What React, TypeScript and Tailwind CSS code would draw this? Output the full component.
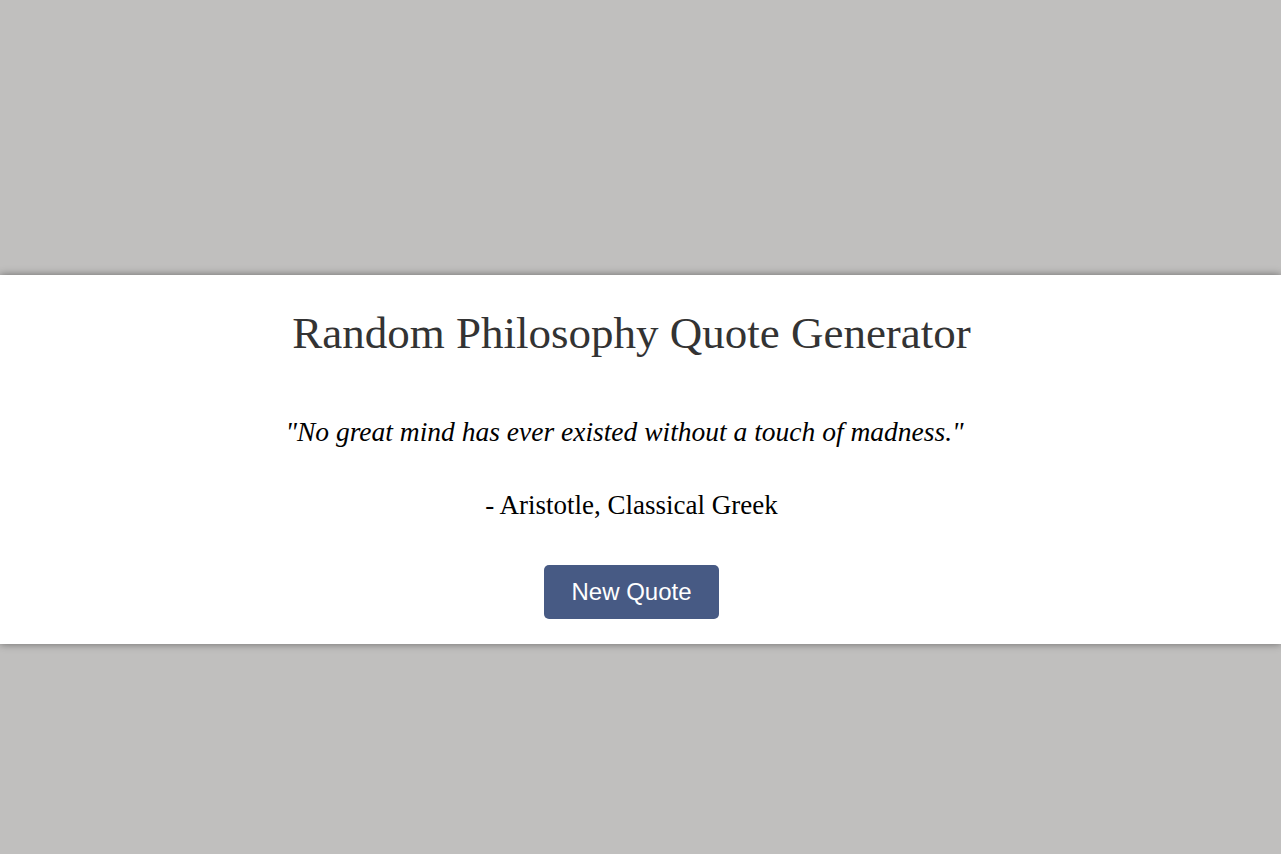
export default function App() {
  return (
    <div className="min-h-screen bg-[#c0bfbe] pt-[275px]">
      <main className="bg-white shadow-[0_0_8px_rgba(0,0,0,0.45)] flex flex-col items-center pt-[28px] pb-[25px] pr-[18px]">
        <h1 className="text-[45px] leading-[60px] text-[#333333] [font-family:'Liberation_Serif',serif]">
          Random Philosophy Quote Generator
        </h1>
        <p className="mt-[49px] mr-[14px] text-[27.5px] leading-[40px] italic text-black [font-family:'Liberation_Serif',serif]">
          "No great mind has ever existed without a touch of madness."
        </p>
        <p className="mt-[35px] text-[27px] leading-[36px] text-black font-light [font-family:'Liberation_Serif',serif]">
          - Aristotle, Classical Greek
        </p>
        <button className="mt-[42px] w-[175px] h-[54px] rounded-[5px] bg-[#475a84] text-white text-[24px] [font-family:'Liberation_Sans',Arial,sans-serif]">
          New Quote
        </button>
      </main>
    </div>
  );
}
